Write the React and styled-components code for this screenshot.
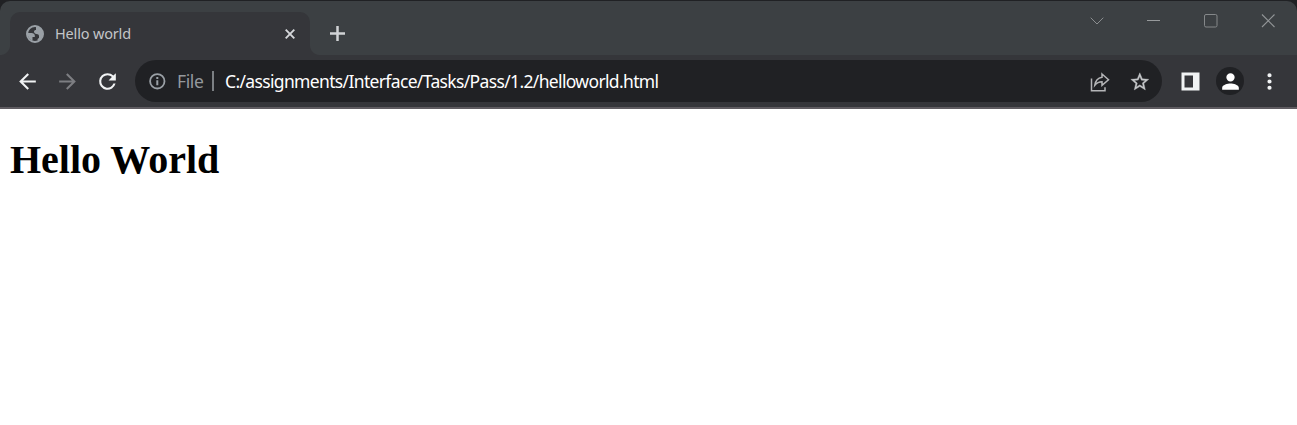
import React from "react";
import styled, { createGlobalStyle } from "styled-components";

const GlobalStyle = createGlobalStyle`
  * { box-sizing: border-box; }
  body { margin: 0; background: #fff; overflow: hidden; }
  svg { display: block; flex: none; }
`;

const uiFont = `"Noto Sans", "Open Sans", sans-serif`;

const Window = styled.div`
  height: 425px;
  display: flex;
  flex-direction: column;
  background: #fff;
`;

const Backdrop = styled.div`
  background: #202124;
  padding-top: 1px;
`;

const TabStrip = styled.div`
  height: 54px;
  display: flex;
  align-items: flex-start;
  background: #3c4043;
  border-radius: 10px 10px 0 0;
  padding-left: 10px;
`;

const Tab = styled.div`
  position: relative;
  width: 300px;
  height: 43px;
  margin-top: 11px;
  padding: 0 12px 0 16px;
  display: flex;
  align-items: center;
  background: #35363a;
  border-radius: 10px 10px 0 0;

  &::before,
  &::after {
    content: "";
    position: absolute;
    bottom: 0;
    width: 10px;
    height: 10px;
  }
  &::before {
    left: -10px;
    background: radial-gradient(circle at 0 0, transparent 9.5px, #35363a 10.5px);
  }
  &::after {
    right: -10px;
    background: radial-gradient(circle at 100% 0, transparent 9.5px, #35363a 10.5px);
  }
`;

const TabTitle = styled.span`
  flex: 1;
  margin-left: 11px;
  padding-bottom: 2px;
  font: 14.5px/20px ${uiFont};
  letter-spacing: -0.17px;
  color: #c3c5c8;
`;

const TabButton = styled.span`
  display: flex;
  width: 16px;
  justify-content: center;
`;

const NewTab = styled.span`
  display: flex;
  margin: 24px 0 0 19px;
`;

const WindowControls = styled.div`
  margin-left: auto;
  padding: 12px 21px 0 0;
  display: flex;
  gap: 41px;
`;

const Toolbar = styled.div`
  height: 54px;
  display: flex;
  align-items: center;
  padding: 0 15px;
  background: #35363a;
  border-bottom: 2px solid #5f5c61;
`;

const NavButtons = styled.div`
  display: flex;
  gap: 15px;
`;

const AddressBar = styled.div`
  width: 1027px;
  height: 42px;
  margin-left: 15px;
  padding: 0 10px 0 12px;
  display: flex;
  align-items: center;
  border-radius: 21px;
  background: #202124;
  font: 17.5px/24px ${uiFont};
`;

const Scheme = styled.span`
  width: 27px;
  margin-left: 10px;
  color: #94989c;
  letter-spacing: -0.4px;
  white-space: nowrap;
`;

const Divider = styled.span`
  width: 2px;
  height: 20px;
  margin: 0 11px 0 8px;
  background: #7c8084;
`;

const Url = styled.span`
  flex: 1;
  color: #fff;
  letter-spacing: -0.65px;
  white-space: nowrap;
`;

const AddressActions = styled.div`
  display: flex;
  gap: 15px;
`;

const ToolbarActions = styled.div`
  flex: 1;
  padding-left: 19px;
  display: flex;
  align-items: center;
`;

const Avatar = styled.span`
  width: 28px;
  height: 28px;
  margin: 0 13px 0 16px;
  display: flex;
  align-items: center;
  justify-content: center;
  border-radius: 50%;
  background: #202124;
`;

const Page = styled.main`
  flex: 1;
  padding: 0 10px;
  color: #000;
`;

const Heading = styled.h1`
  margin: 28px 0 0;
  font: bold 40px/46px "Liberation Serif", serif;
`;

function Icon({ d, size = 25, color = "#f1f3f4" }) {
  return (
    <svg width={size} height={size} viewBox="0 0 24 24" fill={color}>
      <path d={d} />
    </svg>
  );
}

const BACK = "M20 11H7.83l5.59-5.59L12 4l-8 8 8 8 1.41-1.41L7.83 13H20v-2z";
const FORWARD = "M12 4l-1.41 1.41L16.17 11H4v2h12.17l-5.58 5.59L12 20l8-8z";
const RELOAD =
  "M17.65 6.35A7.96 7.96 0 0 0 12 4a8 8 0 1 0 7.73 10h-2.08A6 6 0 1 1 12 6c1.66 0 3.14.69 4.22 1.78L13 11h7V4z";
const STAR =
  "M22 9.24l-7.19-.62L12 2 9.19 8.63 2 9.24l5.46 4.73L5.82 21 12 17.27 18.18 21l-1.63-7.03zM12 15.4l-3.76 2.27 1-4.28-3.32-2.88 4.38-.38L12 6.1l1.71 4.04 4.38.38-3.32 2.88 1 4.28z";
const MORE =
  "M12 8a2 2 0 1 0 0-4 2 2 0 0 0 0 4zm0 2a2 2 0 1 0 0 4 2 2 0 0 0 0-4zm0 6a2 2 0 1 0 0 4 2 2 0 0 0 0-4z";

export default function App() {
  return (
    <Window>
      <GlobalStyle />
      <Backdrop>
        <TabStrip>
          <Tab>
            <svg width="18" height="18" viewBox="0 0 18 18">
              <circle cx="9" cy="9" r="8" fill="none" stroke="#9aa0a6" strokeWidth="2" />
              <path
                fill="#9aa0a6"
                d="M10 1.2 C14.5 1.5 17 5 17 9 C17 12 15 15 12 16 C11 15 11.5 13.5 13 13 V11 C13 9.8 12 9 10.5 9 C9 9 8 8 8 6.5 C8 5.5 9 5 10 5 Z M1.5 8 H5.5 C7.5 8 8.8 9 8.8 10.5 V12 H6.5 V15.8 C3.5 14.5 1.5 12 1.5 8 Z"
              />
            </svg>
            <TabTitle>Hello world</TabTitle>
            <TabButton>
              <svg width="10" height="10" viewBox="0 0 10 10" stroke="#d5d7da" strokeWidth="1.9">
                <path d="M.7.7l8.6 8.6M9.3.7L.7 9.3" />
              </svg>
            </TabButton>
          </Tab>
          <NewTab>
            <svg width="17" height="17" viewBox="0 0 17 17" stroke="#d0d2d5" strokeWidth="2.5">
              <path d="M8.5 1v15M1 8.5h15" />
            </svg>
          </NewTab>
          <WindowControls>
            <svg width="16" height="16" viewBox="0 0 16 16" fill="none" stroke="#8b8e90">
              <path d="M2.7 4.7L9 11l6.3-6.3" />
            </svg>
            <svg width="17" height="16" viewBox="0 0 17 16" stroke="#979a9c">
              <path d="M2 7.5h13" />
            </svg>
            <svg width="16" height="16" viewBox="0 0 16 16" fill="none" stroke="#85888a">
              <rect x="1.5" y="1.5" width="12.5" height="12.5" rx="1.5" />
            </svg>
            <svg width="16" height="16" viewBox="0 0 16 16" stroke="#929597" strokeWidth="1.1">
              <path d="M2 1.5l12.5 12.5M14.5 1.5L2 14" />
            </svg>
          </WindowControls>
        </TabStrip>
      </Backdrop>
      <Toolbar>
        <NavButtons>
          <Icon d={BACK} />
          <Icon d={FORWARD} color="#7d7e82" />
          <Icon d={RELOAD} />
        </NavButtons>
        <AddressBar>
          <svg width="20" height="20" viewBox="0 0 20 20" fill="none" stroke="#9aa0a6" strokeWidth="2">
            <circle cx="10.3" cy="10.3" r="7.2" strokeWidth="1.8" />
            <path d="M10.3 9.3v5M10.3 6v2" />
          </svg>
          <Scheme>File</Scheme>
          <Divider />
          <Url>C:/assignments/Interface/Tasks/Pass/1.2/helloworld.html</Url>
          <AddressActions>
            <svg width="25" height="25" viewBox="0 0 25 25" fill="none" stroke="#b4b5b7" strokeWidth="1.5">
              <path d="M4.5 9.5v12.2H18v-3.5" />
              <path d="M15 5l6.5 5.7-6.5 5.6v-3.5c-3.2 0-5.3 1.2-7.2 3.5.6-4.2 2.8-7.3 7.2-8z" />
            </svg>
            <svg width="25" height="25" viewBox="0 0 25 25">
              <g transform="translate(2 2) scale(.9)">
                <path d={STAR} fill="#c5c7c9" stroke="#c5c7c9" strokeWidth=".4" />
              </g>
            </svg>
          </AddressActions>
        </AddressBar>
        <ToolbarActions>
          <svg width="19" height="19" viewBox="0 0 19 19">
            <path fill="#f1f3f4" fillRule="evenodd" d="M.5.5h18v18H.5zM3.5 3.5v12H12v-12z" />
          </svg>
          <Avatar>
            <Icon d="M12 12a4 4 0 1 0 0-8 4 4 0 0 0 0 8zm0 2c-2.67 0-8 1.34-8 4v2h16v-2c0-2.66-5.33-4-8-4z" color="#fff" />
          </Avatar>
          <Icon d={MORE} />
        </ToolbarActions>
      </Toolbar>
      <Page>
        <Heading>Hello World</Heading>
      </Page>
    </Window>
  );
}
